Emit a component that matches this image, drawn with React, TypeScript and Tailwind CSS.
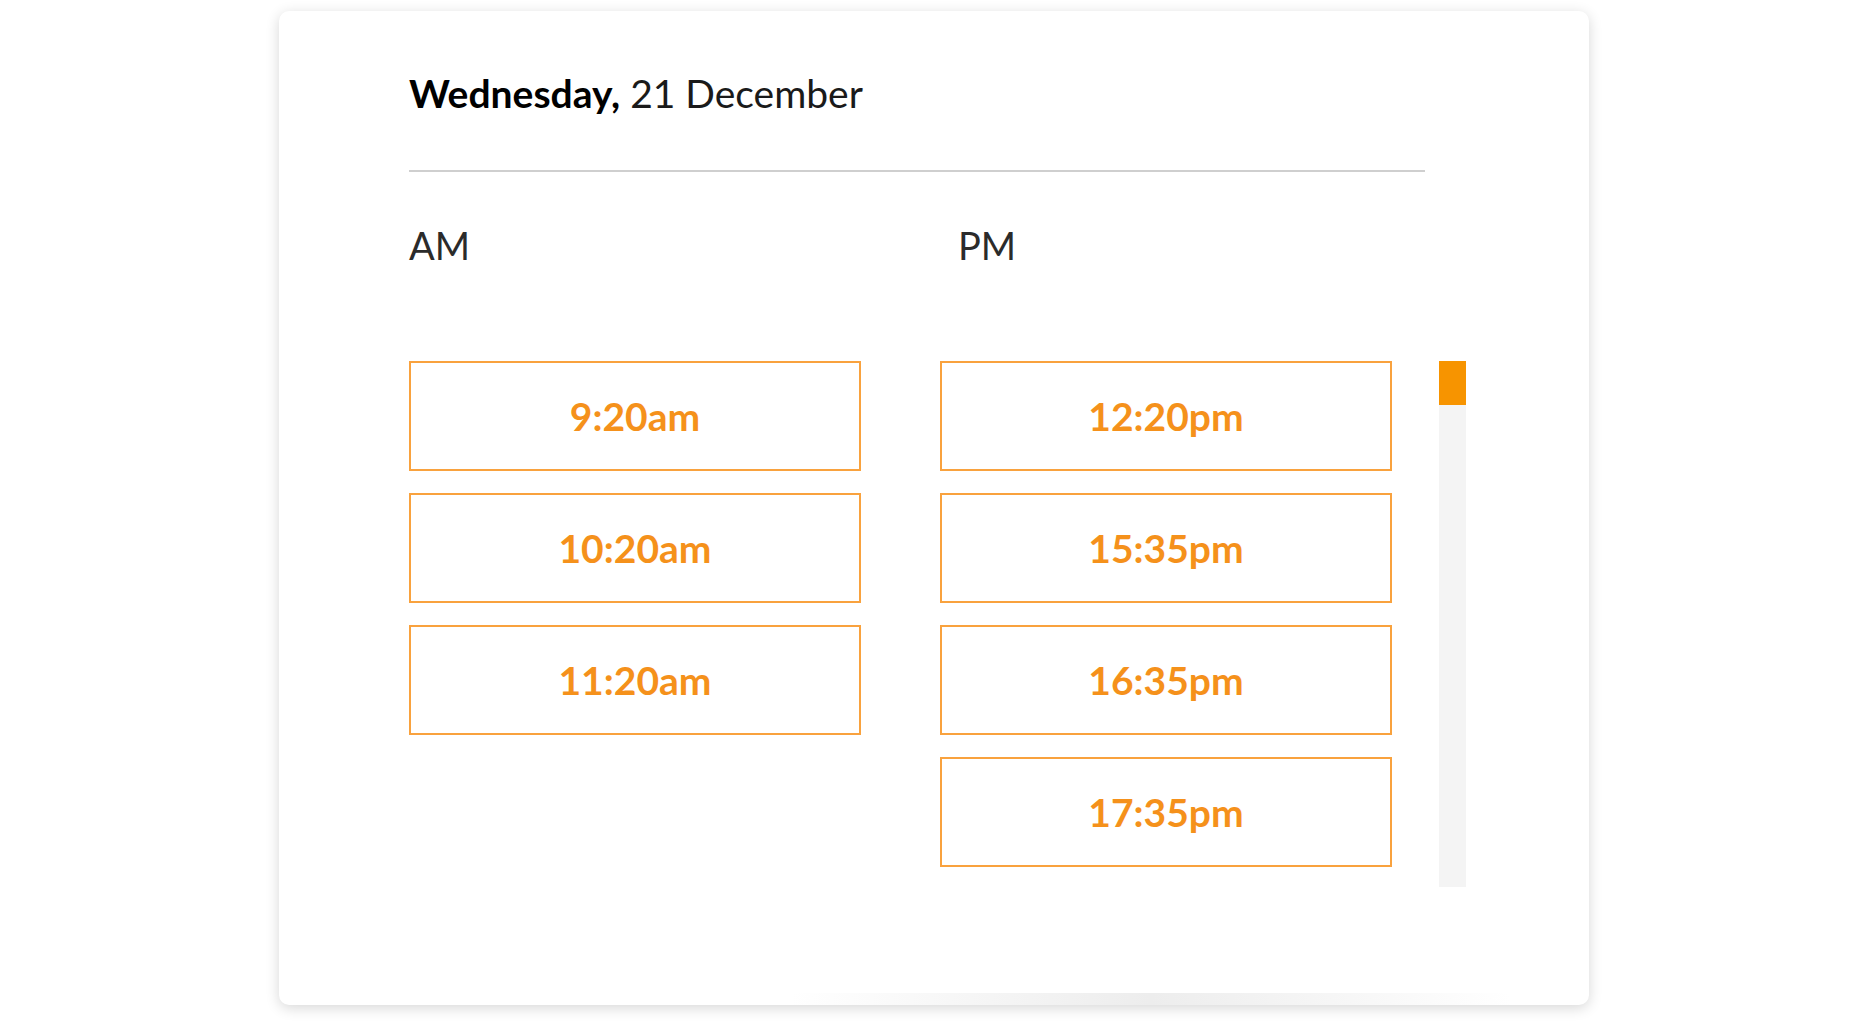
const amSlots = ["9:20am", "10:20am", "11:20am"];
const pmSlots = ["12:20pm", "15:35pm", "16:35pm", "17:35pm"];

function SlotButton({ label }: { label: string }) {
  return (
    <button
      type="button"
      className="flex h-[110px] w-full items-center justify-center border-2 border-[#f9a23e] bg-white text-[39px] font-bold leading-none text-[#f5911b]"
    >
      {label}
    </button>
  );
}

export default function App() {
  return (
    <div
      className="min-h-screen bg-white pt-[11px]"
      style={{ fontFamily: "Lato, 'Open Sans', sans-serif" }}
    >
      <div className="ml-[279px] flex h-[994px] w-[1310px] flex-col rounded-[10px] bg-white pl-[130px] pt-[63px] shadow-[0_3px_14px_rgba(0,0,0,0.16)]">
        {/* date header */}
        <h1 className="text-[39px] leading-none text-[#1a1a1a]">
          <span className="font-bold text-black">Wednesday,</span> 21 December
        </h1>
        <div className="mt-[57px] h-[2px] w-[1016px] bg-[#cfcfcf]" />

        {/* column labels */}
        <div className="mt-[54px] flex text-[38px] leading-none text-[#2b2b2b]">
          <span className="w-[549px]">AM</span>
          <span>PM</span>
        </div>

        {/* time slots */}
        <div className="mt-[97px] flex items-start">
          <div className="flex w-[452px] flex-col gap-[22px]">
            {amSlots.map((t) => (
              <SlotButton key={t} label={t} />
            ))}
          </div>
          <div className="ml-[79px] flex w-[452px] flex-col gap-[22px]">
            {pmSlots.map((t) => (
              <SlotButton key={t} label={t} />
            ))}
          </div>
          {/* scroll track */}
          <div className="ml-[47px] h-[526px] w-[27px] bg-[#f4f4f4]">
            <div className="h-[44px] w-full bg-[#f79400]" />
          </div>
        </div>

        <div className="mt-auto ml-[382px] h-[12px] w-[720px] bg-gradient-to-r from-transparent via-[#ededed] to-transparent" />
      </div>
    </div>
  );
}
